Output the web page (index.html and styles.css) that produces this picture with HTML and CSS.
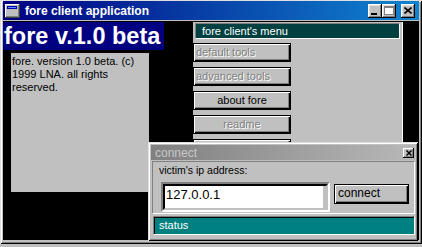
FILE: index.html
```html
<!DOCTYPE html>
<html>
<head>
  <meta charset="UTF-8">
  <title>fore client application</title>
  <link rel="stylesheet" href="styles.css">
</head>
<body>
  <div class="window">
    <div class="titlebar">
      <svg class="app-icon" width="15" height="14" viewBox="0 0 15 14">
        <rect x="0" y="0" width="15" height="14" fill="#404040"/>
        <rect x="0" y="0" width="14" height="13" fill="#ffffff"/>
        <rect x="1" y="1" width="13" height="12" fill="#808080"/>
        <rect x="1" y="1" width="12" height="11" fill="#c0c0c0"/>
        <rect x="2" y="2" width="10" height="3" fill="#0000a8"/>
        <rect x="3" y="3" width="8" height="1" fill="#5a8cff"/>
      </svg>
      <span class="title-text">fore client application</span>
      <div class="title-buttons">
        <div class="tb-btn">
          <svg width="8" height="8" viewBox="0 0 8 8"><rect x="0" y="6" width="6" height="2" fill="#000"/></svg>
        </div>
        <div class="tb-btn">
          <svg width="10" height="9" viewBox="0 0 10 9">
            <rect x="1" y="1" width="9" height="8" fill="#fff"/>
            <rect x="0" y="0" width="9" height="8" fill="none" stroke="#808080" stroke-width="1" transform="translate(0.5 0.5)"/>
            <rect x="0" y="0" width="9" height="2" fill="#808080"/>
          </svg>
        </div>
        <div class="tb-btn tb-close">
          <svg width="8" height="7" viewBox="0 0 8 7"><path d="M0.5 0.5l7 6M7.5 0.5l-7 6" stroke="#000" stroke-width="1.6"/></svg>
        </div>
      </div>
    </div>

    <div class="client">
      <div class="left-col">
        <div class="banner">fore v.1.0 beta</div>
        <div class="about-box">fore. version 1.0 beta. (c) 1999 LNA. all rights reserved.</div>
      </div>
      <div class="menu-panel">
        <div class="menu-header">fore client's menu</div>
        <div class="menu-list">
          <div class="menu-btn off flush">default tools</div>
          <div class="menu-btn off flush">advanced tools</div>
          <div class="menu-btn">about fore</div>
          <div class="menu-btn off">readme</div>
          <div class="menu-btn">exit</div>
        </div>
      </div>
    </div>

    <!-- connect window sits over the main window -->
    <div class="connect">
      <div class="dlg-title">
        <span>connect</span>
        <div class="dlg-close">
          <svg width="6" height="6" viewBox="0 0 6 6"><path d="M0.5 0.5l5 5M5.5 0.5l-5 5" stroke="#000" stroke-width="1.5"/></svg>
        </div>
      </div>
      <div class="dlg-body">
        <div class="dlg-label">victim's ip address:</div>
        <div class="ip-row">
          <div class="ip-box">
            <div class="ip-field">
              <span class="ip-text">127.0.0.1</span>
              <span class="ip-strip"></span>
            </div>
          </div>
          <div class="connect-btn">connect</div>
        </div>
      </div>
      <div class="status">status</div>
    </div>
  </div>
</body>
</html>
```

FILE: styles.css
```css
* {
  box-sizing: border-box;
}
body {
  margin: 0;
  background: #c0c0c0;
  font-family: "Liberation Sans", Arial, sans-serif;
  font-size: 11px;
}
.window {
  position: relative;
  width: 422px;
  height: 244px;
  padding: 1px 3px 4px 3px;
  background: #c0c0c0;
  box-shadow: inset 1px 1px #dfdfdf, inset -1px -1px #000, inset 2px 2px #fff, inset -2px -2px #808080;
  display: flex;
  flex-direction: column;
}

/* title bar */
.titlebar {
  height: 19px;
  margin-bottom: 1px;
  display: flex;
  align-items: center;
  padding: 0 4px 0 2px;
  background: linear-gradient(90deg, #000080, #1084d0);
  color: #fff;
  flex: none;
}
.app-icon {
  flex: none;
  margin-right: 5px;
}
.title-text {
  flex: 1;
  font-weight: bold;
  font-size: 12px;
  white-space: nowrap;
}
.title-buttons {
  display: flex;
}
.tb-btn {
  width: 14px;
  height: 14px;
  background: #c0c0c0;
  box-shadow: inset -1px -1px #000, inset 1px 1px #fff, inset -2px -2px #808080, inset 2px 2px #dfdfdf;
  display: flex;
  align-items: center;
  justify-content: center;
}
.tb-btn svg {
  display: block;
}
.tb-close {
  margin-left: 5px;
}

/* client area */
.client {
  flex: 1;
  background: #000;
  display: flex;
}
.left-col {
  width: 190px;
  flex: none;
  padding-top: 1px;
}
.banner {
  width: 161px;
  height: 28px;
  padding-left: 1px;
  background: #000080;
  color: #fff;
  font-weight: bold;
  font-size: 23.5px;
  line-height: 28px;
  white-space: nowrap;
  overflow: hidden;
}
.about-box {
  margin: 3px 0 0 8px;
  width: 138px;
  height: 139px;
  padding: 2px 1px;
  background: #c0c0c0;
  line-height: 13px;
}
.menu-panel {
  width: 210px;
  margin-top: 1px;
  background: #c0c0c0;
  border-right: 1px solid #fff;
}
.menu-header {
  margin: 1px 2px 0 2px;
  height: 16px;
  padding-left: 6px;
  background: #004040;
  color: #fff;
  border: 1px solid;
  border-color: #808080 #fff #fff #808080;
  line-height: 14px;
}
.menu-list {
  display: flex;
  flex-direction: column;
  gap: 5px;
  margin-top: 4px;
}
.menu-btn {
  width: 98px;
  height: 19px;
  background: #c0c0c0;
  border: 1px solid #000;
  box-shadow: inset 1px 1px #fff, inset -1px -1px #000, inset -2px -2px #808080;
  text-align: center;
  line-height: 16px;
  color: #000;
  white-space: nowrap;
}
.menu-btn.off {
  color: #808080;
  text-shadow: 1px 1px #fff;
}
.menu-btn.flush {
  text-align: left;
  padding-left: 2px;
}

/* connect window */
.connect {
  position: absolute;
  left: 148px;
  top: 142px;
  width: 270px;
  height: 99px;
  padding: 3px 3px 5px 3px;
  background: #c0c0c0;
  box-shadow: inset 1px 1px #dfdfdf, inset -1px -1px #000, inset 2px 2px #fff, inset -2px -2px #808080;
  display: flex;
  flex-direction: column;
}
.dlg-title {
  flex: none;
  height: 15px;
  margin-bottom: 1px;
  padding: 0 1px 0 4px;
  display: flex;
  align-items: center;
  background: linear-gradient(90deg, #808080, #b8b8b8);
  color: #c8c8c8;
  font-size: 12px;
}
.dlg-close {
  margin-left: auto;
  width: 11px;
  height: 10px;
  background: #c0c0c0;
  box-shadow: inset -1px -1px #000, inset 1px 1px #fff, inset -2px -2px #808080;
  display: flex;
  align-items: center;
  justify-content: center;
}
.dlg-close svg {
  display: block;
}
.dlg-body {
  flex: none;
  height: 53px;
  margin: 0 0 2px 1px;
  padding: 2px 0 0 6px;
  border: 1px solid;
  border-color: #808080 #fff #fff #808080;
}
.dlg-label {
  font-size: 10.5px;
  line-height: 13px;
}
.ip-row {
  display: flex;
  align-items: flex-start;
  gap: 4px;
  margin: 5px 0 0 2px;
}
.ip-box {
  width: 169px;
  height: 30px;
  border: 2px solid;
  border-color: #808080 #fff #fff #808080;
}
.ip-field {
  height: 100%;
  display: flex;
  background: #fff;
  border: 2px solid;
  border-color: #000 #c0c0c0 #c0c0c0 #000;
}
.ip-text {
  flex: 1;
  padding: 1px 0 0 1px;
  font-size: 13px;
  line-height: 15px;
}
.ip-strip {
  width: 3px;
  background: #c0c0c0;
}
.connect-btn {
  width: 75px;
  height: 20px;
  margin-top: 2px;
  padding-left: 3px;
  background: #c0c0c0;
  border: 1px solid #000;
  box-shadow: inset 1px 1px #fff, inset -1px -1px #000, inset -2px -2px #808080;
  font-size: 12px;
  line-height: 17px;
}
.status {
  flex: none;
  height: 19px;
  margin-left: 2px;
  padding: 1px 0 0 5px;
  background: #008080;
  color: #fff;
  border: 1px solid;
  border-color: #808080 #fff #fff #808080;
  box-shadow: inset 1px 1px #000;
  line-height: 15px;
}
```
